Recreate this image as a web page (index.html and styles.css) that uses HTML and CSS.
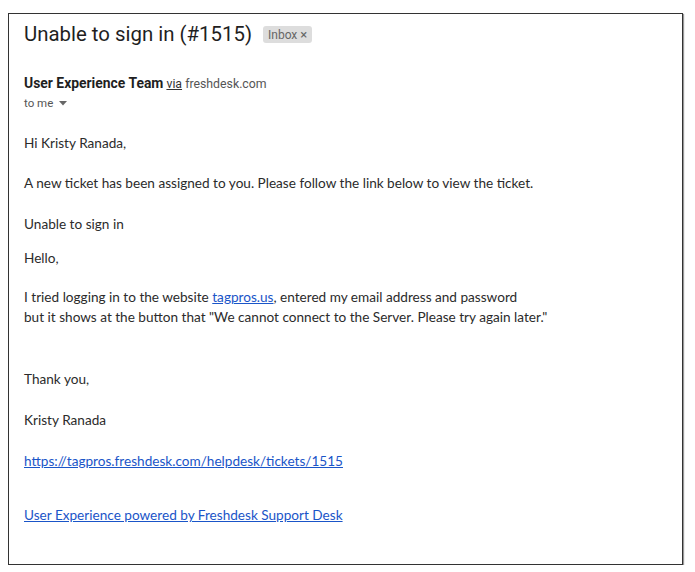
FILE: index.html
```html
<!DOCTYPE html>
<html>
<head>
<meta charset="utf-8">
<link rel="stylesheet" href="styles.css">
</head>
<body>
<div class="frame">
  <div class="subject-row">
    <h1 class="subject">Unable to sign in (#1515)</h1>
    <span class="label">Inbox <span class="label-x">×</span></span>
  </div>
  <div class="sender">
    <span class="sender-name">User Experience Team</span>
    <span class="via">via</span>
    <span class="domain">freshdesk.com</span>
  </div>
  <div class="recipient">to me <svg class="caret" width="8" height="5" viewBox="0 0 8 5"><path d="M0 0h8L4 4.5z" fill="#666"/></svg></div>
  <div class="body">
    <p class="p-greet">Hi Kristy Ranada,</p>
    <p class="p-intro">A new ticket has been assigned to you. Please follow the link below to view the ticket.</p>
    <p class="p-title">Unable to sign in</p>
    <p class="p-hello">Hello,</p>
    <p class="p-msg">I tried logging in to the website <a href="#">tagpros.us</a>, entered my email address and password<br>but it shows at the button that "We cannot connect to the Server. Please try again later."</p>
    <p class="p-thanks">Thank you,</p>
    <p class="p-name">Kristy Ranada</p>
    <p class="p-link"><a href="#">https://tagpros.freshdesk.com/helpdesk/tickets/1515</a></p>
    <p class="p-footer"><a href="#">User Experience powered by Freshdesk Support Desk</a></p>
  </div>
</div>
</body>
</html>
```
FILE: styles.css
```css
* { box-sizing: border-box; }
html, body { margin: 0; padding: 0; background: #fff; }
body { font-family: "Lato", "Liberation Sans", sans-serif; color: #2b2b2b; }
.frame {
  margin: 13px 0 0 8px;
  width: 675px;
  height: 552px;
  border: 1px solid #333;
  box-shadow: 1px 1px 1px #999;
  padding: 0 0 0 15px;
}
.subject-row { display: flex; align-items: center; height: 38px; margin-top: 1px; }
.subject {
  margin: 0;
  font-family: "Roboto", "Liberation Sans", sans-serif;
  font-weight: 400;
  font-size: 20.4px;
  color: #1f1f1f;
}
.label {
  margin-left: 11px;
  background: #ddd;
  color: #666;
  font-family: "Roboto", sans-serif;
  font-size: 12px;
  padding: 1px 5px;
  border-radius: 3px;
}
.label-x { font-size: 13px; }
.sender { margin-top: 22px; font-family: "Roboto", sans-serif; font-size: 12.3px; color: #555; line-height: 16px; }
.sender-name { font-weight: 700; font-size: 13.9px; color: #1f1f1f; }
.via { text-decoration: underline; color: #333; }
.recipient { font-family: "Roboto", sans-serif; font-size: 11.5px; color: #555; margin-top: 3px; line-height: 16px; }
.caret { margin-left: 3px; vertical-align: middle; }
.body { font-size: 13.6px; color: #2b2b2b; line-height: 20px; }
.body p { margin: 0; }
.body a { color: #1a55c8; text-decoration: underline; }
.p-greet { margin-top: 22px !important; }
.p-intro { margin-top: 20px !important; }
.p-title { margin-top: 21px !important; }
.p-hello { margin-top: 14px !important; }
.p-msg { margin-top: 19px !important; }
.p-thanks { margin-top: 42px !important; }
.p-name { margin-top: 21px !important; }
.p-link { margin-top: 21px !important; }
.p-footer { margin-top: 34px !important; }
```
